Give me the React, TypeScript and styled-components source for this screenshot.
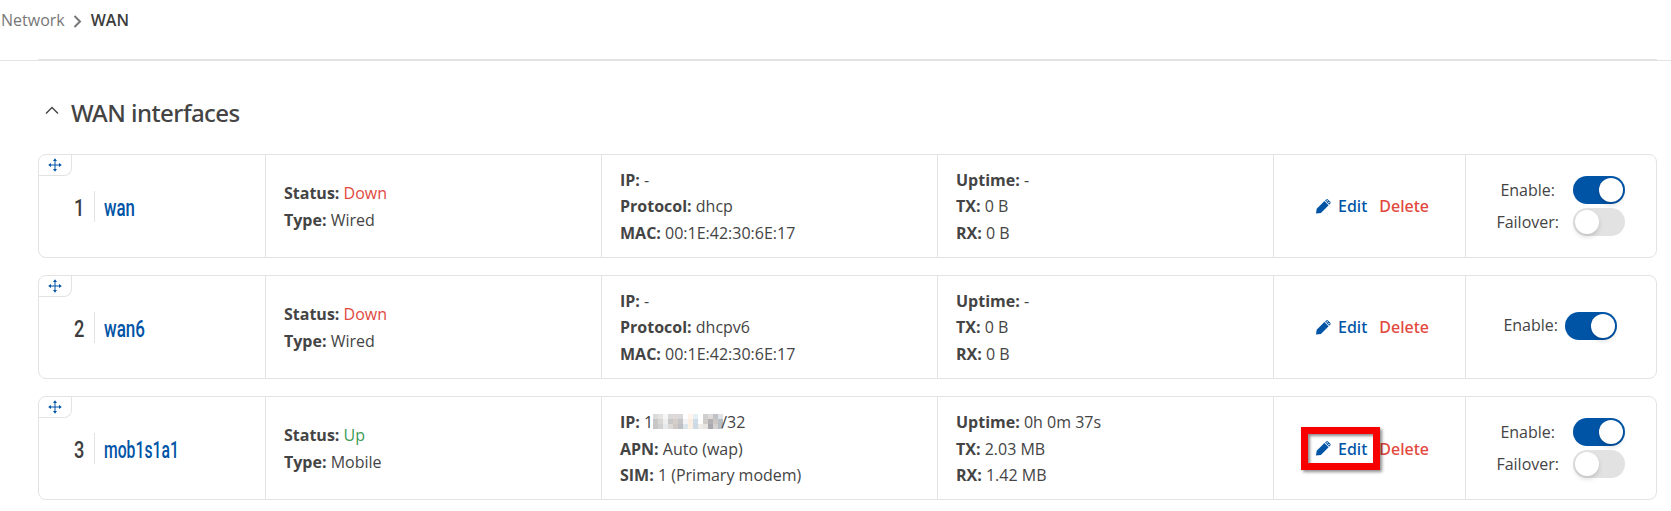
import React from "react";
import styled, { createGlobalStyle } from "styled-components";

const BLUE = "#0054a6";
const RED = "#e2483d";
const LINE = "#e3e3e3";

const GlobalStyle = createGlobalStyle`
  *, *::before, *::after { box-sizing: border-box; }
  body {
    margin: 0;
    background: #fff;
    color: #444;
    font: 16px/26.6px "Open Sans", "Noto Sans", sans-serif;
    overflow: hidden;
  }
`;

const Page = styled.div`
  height: 511px;
  display: flex;
  flex-direction: column;
`;

const Breadcrumb = styled.nav`
  height: 59px;
  padding: 7px 0 0 1px;
  display: flex;
  align-items: flex-start;
  color: #777;
  svg { margin: 8px 9px 0 8px; }
`;

const Current = styled.span`
  color: #3c3c3c;
  font-weight: 600;
`;

const Divider = styled.div`
  height: 2px;
  border-bottom: 1px solid ${LINE};
  &::before {
    content: "";
    display: block;
    height: 1px;
    margin: 0 14px 0 38px;
    background: ${LINE};
  }
`;

const Section = styled.main`
  padding: 35px 14px 0 38px;
`;

const Heading = styled.h2`
  margin: 0 0 25px;
  height: 33px;
  display: flex;
  align-items: center;
  gap: 12px;
  padding-left: 7px;
  font: 500 24px/33px "Noto Sans", sans-serif;
  letter-spacing: -0.55px;
  svg { margin-top: -4px; }
`;

const CardList = styled.div`
  display: flex;
  flex-direction: column;
  gap: 17.24px;
`;

const Card = styled.article`
  height: 104px;
  position: relative;
  display: grid;
  grid-template-columns: 227px 336px 336px 336px 192px 1fr;
  border: 1px solid ${LINE};
  border-radius: 8px;
`;

const DragHandle = styled.div`
  position: absolute;
  top: 0;
  left: 0;
  width: 33px;
  height: 21px;
  display: flex;
  align-items: center;
  justify-content: center;
  border: solid ${LINE};
  border-width: 0 1px 1px 0;
  border-bottom-right-radius: 8px;
`;

const Cell = styled.div`
  display: flex;
  flex-direction: column;
  justify-content: center;
  padding: 1px 0 0 18px;
  border-right: 1px solid ${LINE};
`;

const NameCell = styled(Cell)`
  flex-direction: row;
  justify-content: flex-start;
  align-items: center;
  padding: 0 0 0 35px;
`;

const Priority = styled.div`
  width: 21px;
  height: 31px;
  border-right: 1px solid ${LINE};
`;

const Narrow = styled.span<{ $link?: boolean; $stretch: number }>`
  display: block;
  width: max-content;
  font: 500 24px/34px Roboto, sans-serif;
  transform: scaleX(${(p) => p.$stretch});
  transform-origin: 0 50%;
  color: ${(p) => (p.$link ? BLUE : "#3c3c3c")};
`;

const NameWrap = styled.div`
  width: 90px;
  margin-left: 9px;
  padding-top: 3px;
`;

const Line = styled.div`
  white-space: nowrap;
  height: 26.6px;
  b { font-weight: 700; }
`;

const State = styled.span<{ $up: boolean }>`
  color: ${(p) => (p.$up ? "#3d9b56" : RED)};
`;

const ActionCell = styled(Cell)`
  flex-direction: row;
  justify-content: flex-start;
  align-items: center;
  padding: 1px 0 0 42px;
  font-family: "Noto Sans", sans-serif;
  font-weight: 500;
`;

const EditLink = styled.span`
  position: relative;
  display: flex;
  align-items: center;
  gap: 7px;
  color: ${BLUE};
`;

const Highlight = styled.i`
  position: absolute;
  left: -15px;
  top: -9px;
  width: 79px;
  height: 43px;
  border: 7px solid #f60000;
  box-shadow: 2px 2px 3px rgba(0, 0, 0, 0.45), inset 2px 2px 3px rgba(0, 0, 0, 0.45);
  z-index: 1;
`;

const DeleteLink = styled.span`
  margin-left: 12px;
  color: ${RED};
`;

const SwitchCell = styled.div<{ $single: boolean }>`
  display: flex;
  flex-direction: column;
  justify-content: center;
  align-items: flex-end;
  gap: 4px;
  padding: 0 ${(p) => (p.$single ? 39 : 31)}px ${(p) => (p.$single ? 3 : 0)}px 0;
`;

const SwitchRow = styled.div<{ $gap: number }>`
  height: 28px;
  display: flex;
  align-items: center;
  gap: ${(p) => p.$gap}px;
`;

const Toggle = styled.div<{ $on: boolean }>`
  width: 52px;
  height: 28px;
  padding: 2px;
  display: flex;
  justify-content: ${(p) => (p.$on ? "flex-end" : "flex-start")};
  border-radius: 14px;
  background: ${(p) => (p.$on ? BLUE : "#e2e2e2")};
  &::before {
    content: "";
    width: 24px;
    height: 24px;
    border-radius: 50%;
    background: #fff;
    box-shadow: 0 3px 5px rgba(0, 0, 0, 0.14);
  }
`;

const Redacted = styled.span`
  display: inline-grid;
  grid-template: repeat(3, 5px) / repeat(14, 5px);
  width: 70px;
  margin: 5px -2px 0 0;
  vertical-align: top;
`;

const Pixel = styled.i<{ $tone: string }>`
  background: ${(p) => p.$tone};
`;

const MOSAIC = [
  "#dddada", "#e6e4e2", "#f7f7f7", "#d9d9da", "#ded9d6", "#d8d7d9", "#fff", "#fff5ec", "#e5eff6", "#fff", "#d0cfd0", "#dedbd8", "#c0c2c6", "#dde3e6",
  "#c9c6c7", "#d9d7d6", "#f0eff0", "#c8c7ca", "#d5cdc8", "#c5c5c8", "#f4f4f5", "#fbeee1", "#cddce8", "#fdfdfd", "#cfccca", "#b2b0b5", "#cbc7c5", "#b7bec6",
  "#c7c4c4", "#d0d0d0", "#e8e9eb", "#ddd9d7", "#cfc9c5", "#bebfc2", "#dce5e9", "#fbeee2", "#cddae5", "#eeece8", "#e8e4df", "#a9a8af", "#d5d1d0", "#b9bec4",
];

const MoveIcon = () => (
  <svg width="14" height="14" viewBox="0 0 14 14" fill={BLUE}>
    <path d="M6.5 2h1v10h-1zM2 6.5h10v1H2z" />
    <path d="M7 .2 9 3H5zM7 13.8 5 11h4zM.2 7 3 5v4zM13.8 7 11 9V5z" />
  </svg>
);

const PencilIcon = () => (
  <svg width="15" height="15" viewBox="0 0 15 15" fill={BLUE}>
    <path d="M0 14.5 .7 9.8 8.4 2 12.6 6.2 4.9 13.9Z" />
    <path d="M9 1.6 10.3.4q.8-.7 1.6 0l2.4 2.4q.7.8 0 1.6L13.2 5.7Z" />
    <path d="m10.2 1.9 1-.9.8.8-1 .9zM12 3.7l1-.9.8.8-1 .9z" fill="#fff" />
  </svg>
);

type Entry = [string, React.ReactNode];

interface Interface {
  name: string;
  stretch: number;
  up: boolean;
  type: string;
  net: Entry[];
  stats: Entry[];
  failover: boolean;
  highlighted?: boolean;
}

const INTERFACES: Interface[] = [
  {
    name: "wan",
    stretch: 0.7,
    up: false,
    type: "Wired",
    net: [["IP", "-"], ["Protocol", "dhcp"], ["MAC", "00:1E:42:30:6E:17"]],
    stats: [["Uptime", "-"], ["TX", "0 B"], ["RX", "0 B"]],
    failover: true,
  },
  {
    name: "wan6",
    stretch: 0.71,
    up: false,
    type: "Wired",
    net: [["IP", "-"], ["Protocol", "dhcpv6"], ["MAC", "00:1E:42:30:6E:17"]],
    stats: [["Uptime", "-"], ["TX", "0 B"], ["RX", "0 B"]],
    failover: false,
  },
  {
    name: "mob1s1a1",
    stretch: 0.655,
    up: true,
    type: "Mobile",
    net: [
      ["IP", <>1<Redacted>{MOSAIC.map((tone, i) => <Pixel key={i} $tone={tone} />)}</Redacted>/32</>],
      ["APN", "Auto (wap)"],
      ["SIM", "1 (Primary modem)"],
    ],
    stats: [["Uptime", "0h 0m 37s"], ["TX", "2.03 MB"], ["RX", "1.42 MB"]],
    failover: true,
    highlighted: true,
  },
];

const Lines = ({ entries }: { entries: Entry[] }) => (
  <Cell>
    {entries.map(([label, value]) => (
      <Line key={label}><b>{label}:</b> {value}</Line>
    ))}
  </Cell>
);

const InterfaceCard = ({ item, index }: { item: Interface; index: number }) => (
  <Card>
    <DragHandle><MoveIcon /></DragHandle>
    <NameCell>
      <Priority><Narrow $stretch={0.76}>{index}</Narrow></Priority>
      <NameWrap><Narrow $link $stretch={item.stretch}>{item.name}</Narrow></NameWrap>
    </NameCell>
    <Lines entries={[["Status", <State $up={item.up}>{item.up ? "Up" : "Down"}</State>], ["Type", item.type]]} />
    <Lines entries={item.net} />
    <Lines entries={item.stats} />
    <ActionCell>
      <EditLink>
        <PencilIcon />
        Edit
        {item.highlighted && <Highlight />}
      </EditLink>
      <DeleteLink>Delete</DeleteLink>
    </ActionCell>
    <SwitchCell $single={!item.failover}>
      <SwitchRow $gap={item.failover ? 18 : 7}>Enable:<Toggle $on /></SwitchRow>
      {item.failover && <SwitchRow $gap={14}>Failover:<Toggle $on={false} /></SwitchRow>}
    </SwitchCell>
  </Card>
);

export default function App() {
  return (
    <Page>
      <GlobalStyle />
      <Breadcrumb>
        <span>Network</span>
        <svg width="9" height="13" viewBox="0 0 9 13" fill="none" stroke="#777" strokeWidth="2">
          <path d="m1.5 1 5.5 5.5L1.5 12" />
        </svg>
        <Current>WAN</Current>
      </Breadcrumb>
      <Divider />
      <Section>
        <Heading>
          <svg width="14" height="9" viewBox="0 0 14 9" fill="none" stroke="#444" strokeWidth="1.4">
            <path d="m1 7.5 6-6 6 6" />
          </svg>
          WAN interfaces
        </Heading>
        <CardList>
          {INTERFACES.map((item, i) => <InterfaceCard key={item.name} item={item} index={i + 1} />)}
        </CardList>
      </Section>
    </Page>
  );
}
